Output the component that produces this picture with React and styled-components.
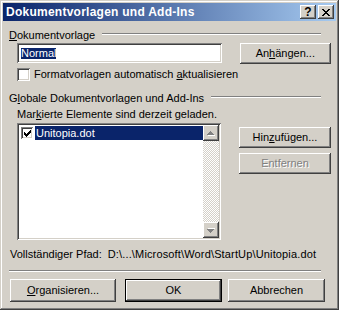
import React from 'react';
import styled, { createGlobalStyle } from 'styled-components';

const GlobalStyle = createGlobalStyle`
  html, body {
    margin: 0;
    padding: 0;
    background: #d4d0c8;
  }
  body {
    font-family: "Liberation Sans", Arial, sans-serif;
    font-size: 11px;
  }
`;

const raised = `
  box-shadow: inset -1px -1px #404040, inset 1px 1px #fff, inset -2px -2px #808080, inset 2px 2px #d4d0c8;
`;

const sunken = `
  box-shadow: inset 1px 1px #808080, inset -1px -1px #fff, inset 2px 2px #404040, inset -2px -2px #d4d0c8;
`;

const Window = styled.div`
  box-sizing: border-box;
  width: 339px;
  height: 310px;
  padding: 3px;
  background: #d4d0c8;
  box-shadow: inset -1px -1px #404040, inset 1px 1px #d4d0c8, inset -2px -2px #808080, inset 2px 2px #fff;
  display: flex;
  flex-direction: column;
  color: #000;
  line-height: 13px;
`;

const TitleBar = styled.div`
  height: 18px;
  display: flex;
  align-items: center;
  padding: 0 2px;
  background: linear-gradient(to right, #0a246a, #a6caf0);
`;

const TitleText = styled.div`
  flex: 1;
  color: #fff;
  font-weight: bold;
  font-size: 12px;
  letter-spacing: 0.25px;
  padding-left: 1px;
`;

const CaptionButton = styled.div`
  box-sizing: border-box;
  width: 16px;
  height: 14px;
  background: #d4d0c8;
  ${raised}
  display: flex;
  align-items: center;
  justify-content: center;
  font-weight: bold;
  font-size: 12px;
  line-height: 14px;
  & + & {
    margin-left: 2px;
  }
`;

const Body = styled.div`
  display: flex;
  flex-direction: column;
  padding: 8px 5px 0 6px;
`;

const GroupHeader = styled.div`
  display: flex;
  align-items: flex-start;
  height: 13px;
  margin-top: ${p => p.$top || 0}px;
`;

const HeaderLine = styled.div`
  flex: 1;
  height: 0;
  margin: 4px 10px 0 7px;
  border-top: 1px solid #808080;
  border-bottom: 1px solid #fff;
`;

const Indented = styled.div`
  display: flex;
  align-items: flex-start;
  padding-left: 8px;
  margin-top: ${p => p.$top || 0}px;
`;

const TextField = styled.div`
  box-sizing: border-box;
  width: 206px;
  height: 20px;
  padding: 4px 0 0 4px;
  background: #fff;
  ${sunken}
`;

const Selected = styled.span`
  display: inline-block;
  height: 11px;
  line-height: 11px;
  background: #0a246a;
  color: #fff;
`;

const Button = styled.div`
  box-sizing: border-box;
  width: ${p => p.$width || 92}px;
  height: ${p => p.$height || 21}px;
  margin-left: ${p => p.$left || 0}px;
  background: #d4d0c8;
  ${raised}
  display: flex;
  align-items: center;
  justify-content: center;
  color: ${p => (p.$disabled ? '#808080' : '#000')};
  text-shadow: ${p => (p.$disabled ? '1px 1px #fff' : 'none')};
`;

const DefaultButton = styled(Button)`
  box-shadow: inset 0 0 0 1px #000, inset -2px -2px #404040, inset 2px 2px #fff, inset -3px -3px #808080, inset 3px 3px #d4d0c8;
`;

const CheckRow = styled(Indented)`
  align-items: center;
`;

const CheckBox = styled.div`
  box-sizing: border-box;
  width: ${p => p.$size || 13}px;
  height: ${p => p.$size || 13}px;
  background: #fff;
  ${sunken}
  display: flex;
  align-items: center;
  justify-content: center;
  flex-shrink: 0;
`;

const CheckLabel = styled.span`
  margin-left: 4px;
`;

const ListBox = styled.div`
  box-sizing: border-box;
  width: 206px;
  height: 117px;
  padding: 2px;
  background: #fff;
  ${sunken}
  display: flex;
`;

const ListItems = styled.div`
  flex: 1;
  padding-top: 1px;
`;

const ListItem = styled.div`
  display: flex;
  align-items: center;
  height: 14px;
  padding-left: 2px;
`;

const ItemText = styled.span`
  flex: 1;
  margin-left: 2px;
  padding-left: 1px;
  height: 14px;
  line-height: 14px;
  background: #0a246a;
  color: #fff;
`;

const ScrollBar = styled.div`
  width: 16px;
  display: flex;
  flex-direction: column;
  justify-content: space-between;
  background: repeating-conic-gradient(#d4d0c8 0 25%, #fff 0 50%) 0 0 / 2px 2px;
`;

const ArrowButton = styled.div`
  box-sizing: border-box;
  width: 16px;
  height: 16px;
  background: #d4d0c8;
  ${raised}
  display: flex;
  align-items: center;
  justify-content: center;
`;

const SideButtons = styled.div`
  display: flex;
  flex-direction: column;
  gap: 5px;
  margin-left: 18px;
  padding-top: 4px;
`;

const PathLine = styled.div`
  margin-top: 8px;
  padding-left: 1px;
`;

const PathValue = styled.span`
  margin-left: 6px;
  letter-spacing: 0.15px;
`;

const Separator = styled.div`
  height: 0;
  margin: 9px 10px 0 0;
  border-top: 1px solid #808080;
  border-bottom: 1px solid #fff;
`;

const ButtonRow = styled.div`
  display: flex;
  margin-top: 7px;
  padding-left: 1px;
`;

const Key = styled.span`
  text-decoration: underline;
`;

const CloseIcon = () => (
  <svg width="8" height="7" viewBox="0 0 8 7" shapeRendering="crispEdges">
    <path
      fill="#000"
      d="M0 0h2v1H0zM6 0h2v1H6zM1 1h2v1H1zM5 1h2v1H5zM2 2h4v1H2zM3 3h2v1H3zM2 4h4v1H2zM1 5h2v1H1zM5 5h2v1H5zM0 6h2v1H0zM6 6h2v1H6z"
    />
  </svg>
);

const CheckMark = () => (
  <svg width="7" height="7" viewBox="0 0 7 7" shapeRendering="crispEdges">
    <path
      fill="#000"
      d="M6 0h1v1H6zM5 1h2v1H5zM0 2h1v1H0zM4 2h3v1H4zM0 3h2v1H0zM3 3h3v1H3zM0 4h5v1H0zM1 5h3v1H1zM2 6h1v1H2z"
    />
  </svg>
);

const Arrow = ({ down }) => (
  <svg width="8" height="5" viewBox="0 0 8 5" shapeRendering="crispEdges" style={down ? { transform: 'scaleY(-1)' } : undefined}>
    <path fill="#fff" d="M4 1h1v1H4zM5 2h1v1H5zM6 3h1v1H6zM1 4h7v1H1z" />
    <path fill="#808080" d="M3 0h1v1H3zM2 1h3v1H2zM1 2h5v1H1zM0 3h7v1H0z" />
  </svg>
);

const App = () => (
  <>
    <GlobalStyle />
    <Window>
      <TitleBar>
        <TitleText>Dokumentvorlagen und Add-Ins</TitleText>
        <CaptionButton>?</CaptionButton>
        <CaptionButton>
          <CloseIcon />
        </CaptionButton>
      </TitleBar>
      <Body>
        <GroupHeader>
          <span>
            <Key>D</Key>okumentvorlage
          </span>
          <HeaderLine />
        </GroupHeader>
        <Indented $top={1}>
          <TextField>
            <Selected>Normal</Selected>
          </TextField>
          <Button $left={18}>
            <span>
              An<Key>h</Key>ängen...
            </span>
          </Button>
        </Indented>
        <CheckRow $top={4}>
          <CheckBox />
          <CheckLabel>
            Formatvorlagen automatisch <Key>a</Key>ktualisieren
          </CheckLabel>
        </CheckRow>
        <GroupHeader $top={11}>
          <span>
            G<Key>l</Key>obale Dokumentvorlagen und Add-Ins
          </span>
          <HeaderLine />
        </GroupHeader>
        <Indented $top={3}>
          <span>
            Mar<Key>k</Key>ierte Elemente sind derzeit geladen.
          </span>
        </Indented>
        <Indented $top={2}>
          <ListBox>
            <ListItems>
              <ListItem>
                <CheckBox $size={12}>
                  <CheckMark />
                </CheckBox>
                <ItemText>Unitopia.dot</ItemText>
              </ListItem>
            </ListItems>
            <ScrollBar>
              <ArrowButton>
                <Arrow />
              </ArrowButton>
              <ArrowButton>
                <Arrow down />
              </ArrowButton>
            </ScrollBar>
          </ListBox>
          <SideButtons>
            <Button>
              <span>
                Hin<Key>z</Key>ufügen...
              </span>
            </Button>
            <Button $disabled>Entfernen</Button>
          </SideButtons>
        </Indented>
        <PathLine>
          Vollständiger Pfad:
          <PathValue>D:\...\Microsoft\Word\StartUp\Unitopia.dot</PathValue>
        </PathLine>
        <Separator />
        <ButtonRow>
          <Button $width={106} $height={23}>
            <span>
              <Key>O</Key>rganisieren...
            </span>
          </Button>
          <DefaultButton $width={97} $height={23} $left={9}>
            OK
          </DefaultButton>
          <Button $width={97} $height={23} $left={6}>
            Abbrechen
          </Button>
        </ButtonRow>
      </Body>
    </Window>
  </>
);

export default App;
